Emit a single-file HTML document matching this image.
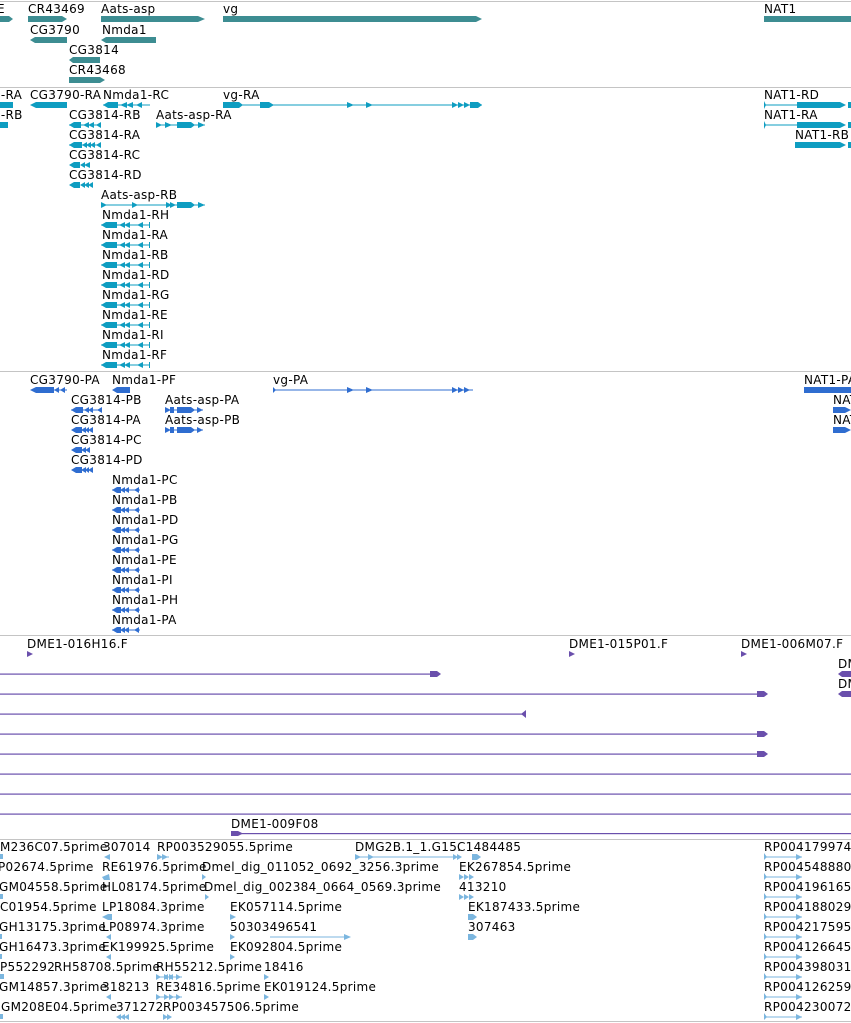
<!DOCTYPE html>
<html><head><meta charset="utf-8"><style>
html,body{margin:0;padding:0;background:#fff;width:851px;height:1023px;overflow:hidden}
svg text{font-family:"DejaVu Sans","Liberation Sans",sans-serif;font-size:12px;fill:#000;letter-spacing:0.3px}
</style></head><body>
<svg width="851" height="1023" viewBox="0 0 851 1023" xmlns="http://www.w3.org/2000/svg">
<g stroke="#c4c4c4" stroke-width="1">
<line x1="0" y1="1.5" x2="851" y2="1.5"/><line x1="0" y1="87.5" x2="851" y2="87.5"/>
<line x1="0" y1="371.5" x2="851" y2="371.5"/><line x1="0" y1="635.5" x2="851" y2="635.5"/>
<line x1="0" y1="839.5" x2="851" y2="839.5"/><line x1="0" y1="1021.5" x2="851" y2="1021.5"/>
</g>
<!-- Section 1 -->
<g fill="#3d8d92">
<polygon points="0,16 9,16 13,19 9,22 0,22"/>
<polygon points="28,16 62,16 67,19 62,22 28,22"/>
<polygon points="101,16 198,16 205,19 198,22 101,22"/>
<polygon points="223,16 476,16 482,19 476,22 223,22"/>
<rect x="764" y="16" width="87" height="6"/>
<polygon points="30,40 35,37 67,37 67,43 35,43"/>
<polygon points="101,40 106,37 156,37 156,43 106,43"/>
<polygon points="69,60 73,57 100,57 100,63 73,63"/>
<polygon points="69,77 100,77 105,80 100,83 69,83"/>
</g>
<text x="-3" y="13">E</text><text x="28" y="13">CR43469</text><text x="101" y="13">Aats-asp</text><text x="223" y="13">vg</text><text x="764" y="13">NAT1</text>
<text x="30" y="34">CG3790</text><text x="102" y="34">Nmda1</text>
<text x="69" y="54">CG3814</text><text x="69" y="74">CR43468</text>
<!-- Section 2 -->
<g fill="#0e9dc1">
<rect x="0" y="102" width="13" height="6"/>
<polygon points="30,105 36,102 67,102 67,108 36,108"/>
<rect x="103" y="104.5" width="47" height="1"/><polygon points="103,105 108,102 118,102 118,108 108,108"/><polygon points="120,105 127,102 127,108"/><polygon points="126,105 133,102 133,108"/><polygon points="136,105 142,102 142,108"/>
<rect x="223" y="104.5" width="259" height="1"/><polygon points="223,102 239,102 243,105 239,108 223,108"/><polygon points="260,102 269,102 274,105 269,108 260,108"/>
<polygon points="347,102 354,105 347,108"/><polygon points="366,102 373,105 366,108"/><polygon points="452,102 458,105 452,108"/><polygon points="458,102 464,105 458,108"/><polygon points="464,102 470,105 464,108"/><polygon points="470,102 478,102 482,105 478,108 470,108"/>
<rect x="764" y="104.5" width="34" height="1"/><polygon points="764,101 766,105 764,109"/><polygon points="797,102 840,102 846,105 840,108 797,108"/><rect x="848" y="102" width="3" height="6"/>
<rect x="0" y="122" width="8" height="6"/>
<rect x="69" y="124.5" width="32" height="1"/><polygon points="69,125 74,122 81,122 81,128 74,128"/><polygon points="83,125 89,122 89,128"/><polygon points="88,125 94,122 94,128"/><polygon points="96,125 101,122 101,128"/>
<rect x="156" y="124.5" width="49" height="1"/><polygon points="156,122 162,125 156,128"/><polygon points="165,122 172,125 165,128"/><polygon points="177,122 191,122 195,125 191,128 177,128"/><polygon points="198,122 205,125 198,128"/>
<rect x="764" y="124.5" width="34" height="1"/><polygon points="764,121 766,125 764,129"/><polygon points="797,122 840,122 846,125 840,128 797,128"/><rect x="848" y="122" width="3" height="6"/>
<polygon points="795,142 840,142 846,145 840,148 795,148"/><rect x="848" y="142" width="3" height="6"/>
<rect x="69" y="144.5" width="32" height="1"/><polygon points="69,145 74,142 82,142 82,148 74,148"/><polygon points="82,145 87,142 87,148"/><polygon points="86,145 91,142 91,148"/><polygon points="90,145 95,142 95,148"/><polygon points="96,145 101,142 101,148"/>
<polygon points="69,165 74,162 80,162 80,168 74,168"/><polygon points="80,165 85,162 85,168"/><polygon points="84,165 90,162 90,168"/>
<polygon points="69,185 74,182 80,182 80,188 74,188"/><polygon points="80,185 85,182 85,188"/><polygon points="84,185 89,182 89,188"/><polygon points="88,185 93,182 93,188"/>
<rect x="101" y="204.5" width="104" height="1"/><polygon points="101,202 107,205 101,208"/><polygon points="132,202 138,205 132,208"/><polygon points="166,202 172,205 166,208"/><polygon points="170,202 176,205 170,208"/><polygon points="177,202 191,202 195,205 191,208 177,208"/><polygon points="198,202 205,205 198,208"/>
</g>
<g id="nm" fill="#0e9dc1">
<rect x="101" y="224.5" width="49" height="1"/><polygon points="101,225 106,222 117,222 117,228 106,228"/><polygon points="119,225 125,222 125,228"/><polygon points="124,225 130,222 130,228"/><polygon points="137,225 143,222 143,228"/><rect x="149" y="222" width="1" height="6"/>
</g>
<use href="#nm" y="20"/><use href="#nm" y="40"/><use href="#nm" y="60"/><use href="#nm" y="80"/><use href="#nm" y="100"/><use href="#nm" y="120"/><use href="#nm" y="140"/>
<text x="-6" y="99">c-RA</text><text x="30" y="99">CG3790-RA</text><text x="103" y="99">Nmda1-RC</text><text x="223" y="99">vg-RA</text><text x="764" y="99">NAT1-RD</text>
<text x="-6" y="119">c-RB</text><text x="69" y="119">CG3814-RB</text><text x="156" y="119">Aats-asp-RA</text><text x="764" y="119">NAT1-RA</text>
<text x="69" y="139">CG3814-RA</text><text x="795" y="139">NAT1-RB</text>
<text x="69" y="159">CG3814-RC</text><text x="69" y="179">CG3814-RD</text><text x="101" y="199">Aats-asp-RB</text>
<text x="102" y="219">Nmda1-RH</text><text x="102" y="239">Nmda1-RA</text><text x="102" y="259">Nmda1-RB</text><text x="102" y="279">Nmda1-RD</text><text x="102" y="299">Nmda1-RG</text><text x="102" y="319">Nmda1-RE</text><text x="102" y="339">Nmda1-RI</text><text x="102" y="359">Nmda1-RF</text>
<!-- Section 3 -->
<g fill="#2f6dd0">
<polygon points="30,390 36,387 54,387 54,393 36,393"/><polygon points="54,390 59,387 59,393"/><rect x="54" y="389.5" width="13" height="1"/><polygon points="60,390 65,387 65,393"/>
<polygon points="112,390 117,387 130,387 130,393 117,393"/>
<rect x="273" y="389.5" width="200" height="1"/><polygon points="273,387 276,390 273,393"/><polygon points="347,387 354,390 347,393"/><polygon points="366,387 373,390 366,393"/><polygon points="452,387 458,390 452,393"/><polygon points="458,387 464,390 458,393"/><polygon points="464,387 470,390 464,393"/>
<polygon points="804,387 851,387 851,393 804,393"/>
<rect x="71" y="409.5" width="31" height="1"/><polygon points="71,410 76,407 83,407 83,413 76,413"/><polygon points="84,410 89,407 89,413"/><polygon points="88,410 93,407 93,413"/><polygon points="97,410 102,407 102,413"/>
<rect x="165" y="409.5" width="38" height="1"/><polygon points="165,407 171,410 165,413"/><polygon points="170,407 174,407 174,413 170,413"/><polygon points="177,407 191,407 195,410 191,413 177,413"/><polygon points="197,407 203,410 197,413"/>
<polygon points="833,407 845,407 851,410 845,413 833,413"/>
<polygon points="71,430 76,427 82,427 82,433 76,433"/><polygon points="81,430 86,427 86,433"/><polygon points="85,430 89,427 89,433"/><polygon points="88,430 93,427 93,433"/>
<rect x="165" y="429.5" width="38" height="1"/><polygon points="165,427 171,430 165,433"/><polygon points="170,427 174,427 174,433 170,433"/><polygon points="177,427 191,427 195,430 191,433 177,433"/><polygon points="197,427 203,430 197,433"/>
<polygon points="833,427 845,427 851,430 845,433 833,433"/>
<polygon points="71,450 76,447 82,447 82,453 76,453"/><polygon points="81,450 86,447 86,453"/><polygon points="85,450 90,447 90,453"/>
<polygon points="71,470 76,467 82,467 82,473 76,473"/><polygon points="81,470 86,467 86,473"/><polygon points="85,470 89,467 89,473"/><polygon points="88,470 93,467 93,473"/>
</g>
<g id="np" fill="#2f6dd0">
<rect x="112" y="489.5" width="28" height="1"/><polygon points="112,490 117,487 121,487 121,493 117,493"/><polygon points="120,490 125,487 125,493"/><polygon points="124,490 129,487 129,493"/><polygon points="134,490 139,487 139,493"/>
</g>
<use href="#np" y="20"/><use href="#np" y="40"/><use href="#np" y="60"/><use href="#np" y="80"/><use href="#np" y="100"/><use href="#np" y="120"/><use href="#np" y="140"/>
<text x="30" y="384">CG3790-PA</text><text x="112" y="384">Nmda1-PF</text><text x="273" y="384">vg-PA</text><text x="804" y="384">NAT1-PA</text>
<text x="71" y="404">CG3814-PB</text><text x="165" y="404">Aats-asp-PA</text><text x="833" y="404">NAT</text>
<text x="71" y="424">CG3814-PA</text><text x="165" y="424">Aats-asp-PB</text><text x="833" y="424">NAT</text>
<text x="71" y="444">CG3814-PC</text><text x="71" y="464">CG3814-PD</text>
<text x="112" y="484">Nmda1-PC</text><text x="112" y="504">Nmda1-PB</text><text x="112" y="524">Nmda1-PD</text><text x="112" y="544">Nmda1-PG</text><text x="112" y="564">Nmda1-PE</text><text x="112" y="584">Nmda1-PI</text><text x="112" y="604">Nmda1-PH</text><text x="112" y="624">Nmda1-PA</text>
<!-- Section 4 -->
<g fill="#6a4fac">
<polygon points="27,651 33,654 27,657"/><polygon points="569,651 575,654 569,657"/><polygon points="741,651 747,654 741,657"/>
<rect x="0" y="673.5" width="436" height="1.2"/><polygon points="430,671 437,671 441,674 437,677 430,677"/>
<polygon points="838,674 842,671 851,671 851,677 842,677"/>
<rect x="0" y="693.5" width="760" height="1.2"/><polygon points="757,691 764,691 768,694 764,697 757,697"/>
<polygon points="838,694 842,691 851,691 851,697 842,697"/>
<rect x="0" y="713.5" width="526" height="1.2"/><polygon points="521,714 526,710 526,718"/>
<rect x="0" y="733.5" width="760" height="1.2"/><polygon points="757,731 764,731 768,734 764,737 757,737"/>
<rect x="0" y="753.5" width="760" height="1.2"/><polygon points="757,751 764,751 768,754 764,757 757,757"/>
<rect x="0" y="773.5" width="851" height="1.2"/><rect x="0" y="793.5" width="851" height="1.2"/><rect x="0" y="813.5" width="851" height="1.2"/>
<rect x="231" y="833" width="620" height="1.2"/><polygon points="231,831 238,831 243,833.5 238,836 231,836"/>
</g>
<text x="27" y="648">DME1-016H16.F</text><text x="569" y="648">DME1-015P01.F</text><text x="741" y="648">DME1-006M07.F</text>
<text x="838" y="668">DME</text><text x="838" y="688">DME</text><text x="231" y="828">DME1-009F08</text>
<!-- Section 5 -->
<g fill="#7bb6df">
<g id="rp"><rect x="764" y="856.5" width="38" height="1"/><polygon points="764,853 767,857 764,860"/><polygon points="796,854 802,857 796,860"/></g>
<use href="#rp" y="20"/><use href="#rp" y="40"/><use href="#rp" y="60"/><use href="#rp" y="80"/><use href="#rp" y="100"/><use href="#rp" y="120"/><use href="#rp" y="140"/><use href="#rp" y="160"/>
<rect x="0" y="854" width="3" height="5"/><rect x="0" y="894" width="3" height="5"/><rect x="0" y="934" width="2" height="5"/><rect x="0" y="954" width="2" height="5"/><rect x="0" y="974" width="4" height="5"/><rect x="0" y="1014" width="3" height="5"/>
<polygon points="104,857 110,854 110,860"/><polygon points="102,877 109,874 110,880 104,880"/><polygon points="102,917 108,914 112,914 112,920 108,920"/><polygon points="106,937 111,934 111,940"/><polygon points="106,957 111,954 111,960"/><polygon points="106,997 111,994 111,1000"/>
<polygon points="157,854 163,857 157,860"/><polygon points="162,854 168,857 162,860"/><rect x="157" y="856.5" width="12" height="1"/>
<polygon points="202,874 206,877 202,880"/><polygon points="205,894 209,897 205,900"/>
<polygon points="230,914 236,917 230,920"/><polygon points="230,934 235,937 230,940"/><polygon points="230,954 235,957 230,960"/>
<rect x="270" y="936.5" width="80" height="1"/><polygon points="344,934 351,937 344,940"/>
<rect x="355" y="856.5" width="105" height="1"/><polygon points="355,854 361,857 355,860"/><polygon points="368,854 374,857 368,860"/><polygon points="453,854 458,857 453,860"/><polygon points="457,854 462,857 457,860"/><polygon points="472,854 477,854 481,857 477,860 472,860"/>
<polygon points="459,874 464,877 459,880"/><polygon points="464,874 469,877 464,880"/><polygon points="469,874 474,877 469,880"/>
<polygon points="459,894 464,897 459,900"/><polygon points="464,894 469,897 464,900"/><polygon points="469,894 474,897 469,900"/>
<polygon points="468,914 473,914 477,917 473,920 468,920"/><polygon points="468,934 473,934 477,937 473,940 468,940"/>
<polygon points="264,974 269,977 264,980"/><polygon points="264,994 269,997 264,1000"/>
<polygon points="163,977 168,974 168,980"/><polygon points="168,977 173,974 173,980"/>
<rect x="156" y="976.5" width="26" height="1"/><polygon points="156,974 161,977 156,980"/><polygon points="164,974 169,977 164,980"/><polygon points="169,974 174,977 169,980"/><polygon points="176,974 181,977 176,980"/>
<rect x="156" y="996.5" width="26" height="1"/><polygon points="156,994 161,997 156,1000"/><polygon points="164,994 169,997 164,1000"/><polygon points="169,994 174,997 169,1000"/><polygon points="176,994 181,997 176,1000"/>
<polygon points="116,1017 121,1014 121,1020"/><polygon points="120,1017 125,1014 125,1020"/><polygon points="124,1017 129,1014 129,1020"/>
<polygon points="163,1014 168,1017 163,1020"/><polygon points="167,1014 172,1017 167,1020"/>
</g>
<text x="0" y="851">M236C07.5prime</text><text x="103" y="851">307014</text><text x="157" y="851">RP003529055.5prime</text><text x="355" y="851">DMG2B.1_1.G15.</text><text x="457" y="851">C1484485</text><text x="764" y="851">RP004179974</text>
<text x="-2" y="871">P02674.5prime</text><text x="102" y="871">RE61976.5prime</text><text x="202" y="871">Dmel_dig_011052_0692_3256.3prime</text><text x="459" y="871">EK267854.5prime</text><text x="764" y="871">RP004548880</text>
<text x="-1" y="891">GM04558.5prime</text><text x="102" y="891">HL08174.5prime</text><text x="204" y="891">Dmel_dig_002384_0664_0569.3prime</text><text x="459" y="891">413210</text><text x="764" y="891">RP004196165</text>
<text x="0" y="911">C01954.5prime</text><text x="102" y="911">LP18084.3prime</text><text x="230" y="911">EK057114.5prime</text><text x="468" y="911">EK187433.5prime</text><text x="764" y="911">RP004188029</text>
<text x="-1" y="931">GH13175.3prime</text><text x="102" y="931">LP08974.3prime</text><text x="230" y="931">50303496541</text><text x="468" y="931">307463</text><text x="764" y="931">RP004217595</text>
<text x="-1" y="951">GH16473.3prime</text><text x="102" y="951">EK199925.5prime</text><text x="230" y="951">EK092804.5prime</text><text x="764" y="951">RP004126645</text>
<text x="0" y="971">P552292</text><text x="54" y="971">RH58708.5prime</text><text x="156" y="971">RH55212.5prime</text><text x="264" y="971">18416</text><text x="764" y="971">RP004398031</text>
<text x="-1" y="991">GM14857.3prime</text><text x="102" y="991">318213</text><text x="156" y="991">RE34816.5prime</text><text x="264" y="991">EK019124.5prime</text><text x="764" y="991">RP004126259</text>
<text x="1" y="1011">GM208E04.5prime</text><text x="116" y="1011">371272</text><text x="163" y="1011">RP003457506.5prime</text><text x="764" y="1011">RP004230072</text>
</svg>
</body></html>
